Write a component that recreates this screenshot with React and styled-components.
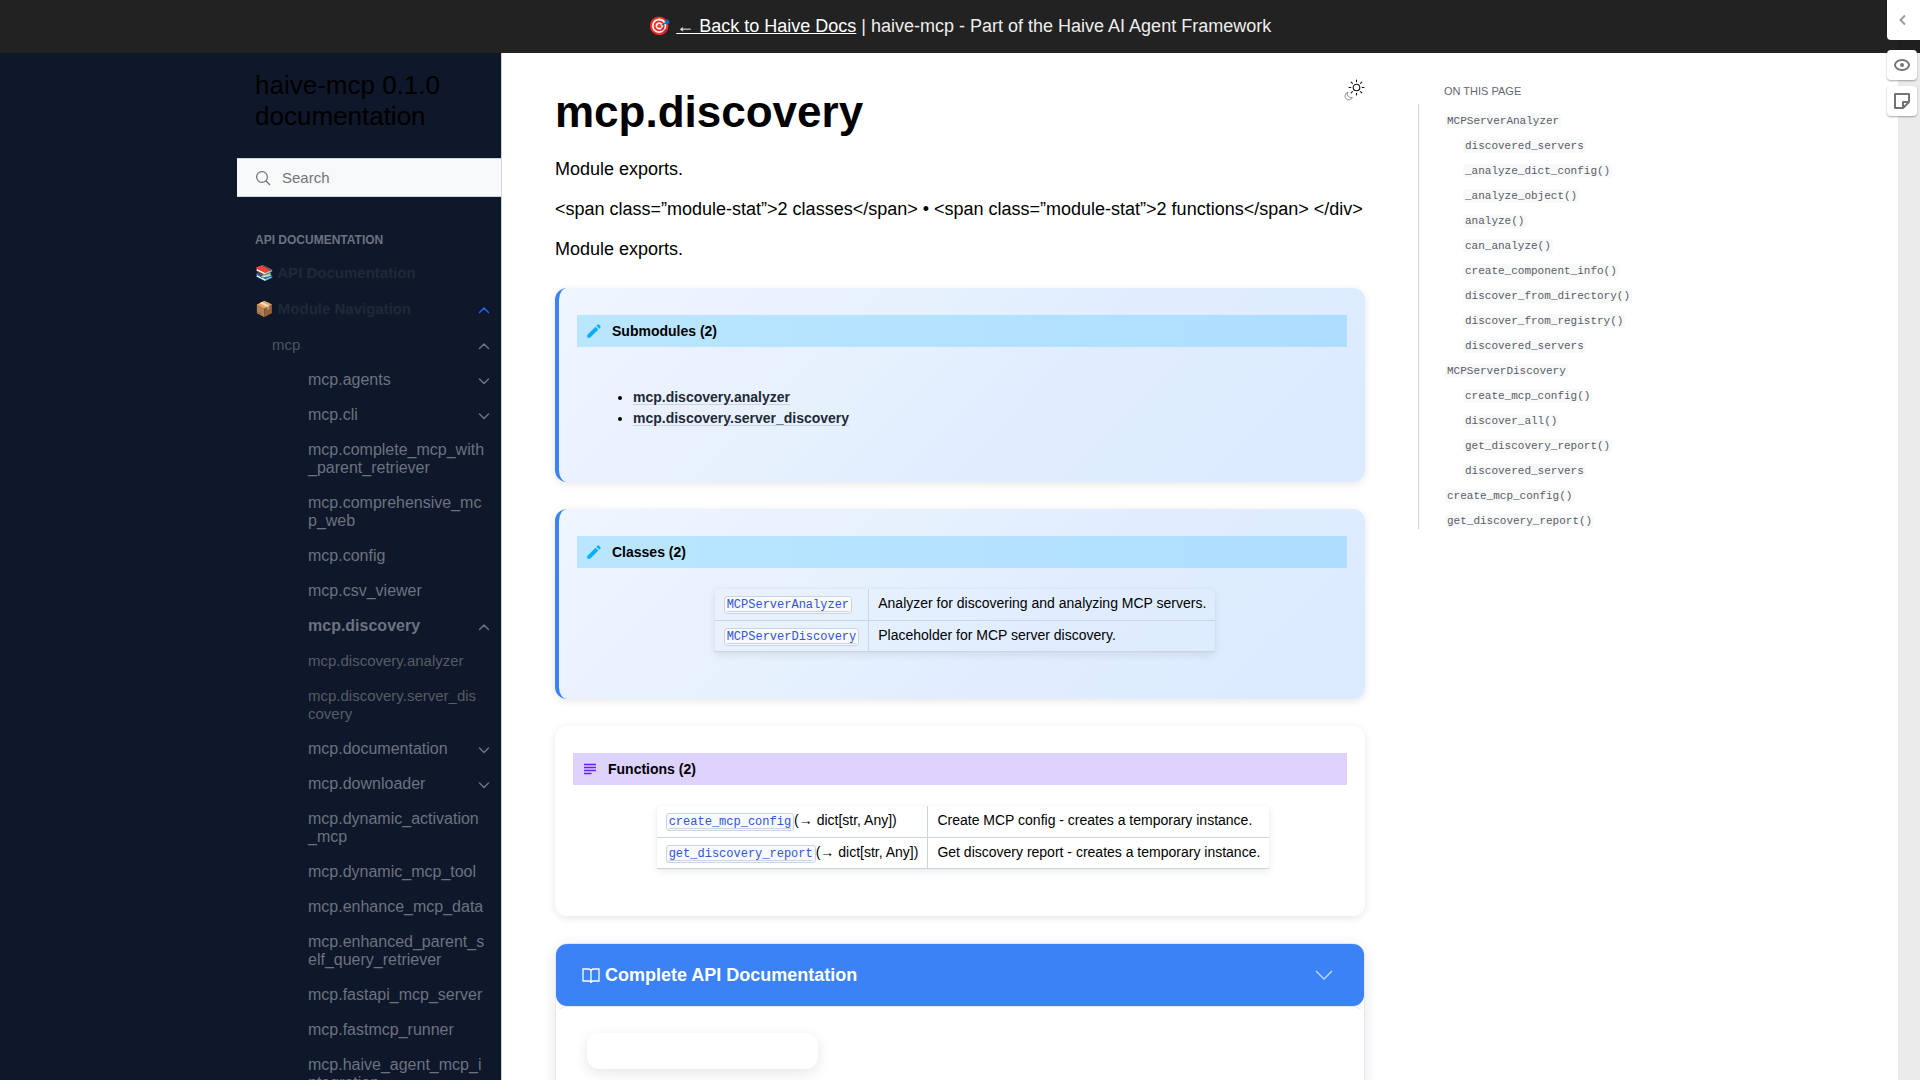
import React from "react";
import styled, { createGlobalStyle } from "styled-components";

const sans = `"Liberation Sans", Arial, "Noto Color Emoji", sans-serif`;
const mono = `"Liberation Mono", "Courier New", monospace`;
const line = "#cbd5e1";

const GlobalStyle = createGlobalStyle`
  *, *::before, *::after { box-sizing: border-box; }
  body { margin: 0; background: #fff; color: #000; font: 18px/26px ${sans}; }
  a { color: inherit; text-decoration: none; }
  ul { margin: 0; padding: 0; list-style: none; }
  button { margin: 0; padding: 0; border: 0; background: none; font: inherit; color: inherit; cursor: pointer; }
`;

const Page = styled.div`
  display: flex;
  flex-direction: column;
  height: 100vh;
  overflow: hidden;
`;

const Banner = styled.header`
  flex: none;
  height: 53px;
  padding: 13px 16px;
  background: #222;
  color: #eee;
  text-align: center;

  a { color: #fff; text-decoration: underline; }
`;

const Columns = styled.div`
  flex: 1;
  min-height: 0;
  display: grid;
  grid-template-columns: minmax(265px, 1fr) minmax(0, 916px) minmax(265px, 1fr);
  grid-template-rows: minmax(0, 1fr);
`;

const Sidebar = styled.aside`
  display: flex;
  justify-content: flex-end;
  background: #0f172a;
  border-right: 1px solid ${line};
  overflow: hidden;
`;

const SidebarInner = styled.div`
  width: 264px;
  flex: none;
`;

const Brand = styled.a`
  display: block;
  padding: 17px 18px 26px;
  font-size: 26px;
  line-height: 31px;
  color: #000;
`;

const SearchBox = styled.label`
  display: flex;
  align-items: center;
  gap: 11px;
  height: 39px;
  padding: 0 18px;
  background: #f8f9fb;
  border: solid ${line};
  border-width: 1px 0;
  color: #6b7280;

  input {
    flex: 1;
    min-width: 0;
    border: 0;
    padding: 0;
    outline: 0;
    background: transparent;
    font: 15px/18px ${sans};
  }
  input::placeholder { color: #757575; }
`;

const Caption = styled.p`
  margin: 34px 0 0;
  padding: 0 18px;
  font-size: 12px;
  line-height: 18px;
  font-weight: bold;
  text-transform: uppercase;
  color: #6b7280;
`;

const NavList = styled.ul`
  margin-top: 7px;
`;

const navTones = {
  top: "#1f2937",
  group: "#4b5563",
  module: "#6b7280",
  sub: "#565b66",
};

const navIndents = { top: 18, group: 35, module: 71, sub: 71 };

const navWidths = { top: 200, group: 178, module: 178, sub: 174 };

const NavRow = styled.div`
  display: flex;
  justify-content: space-between;
  min-height: ${(p) => (p.$kind === "top" ? 36 : 35)}px;
  padding-left: ${(p) => navIndents[p.$kind]}px;

  a {
    flex: none;
    max-width: ${(p) => navWidths[p.$kind]}px;
    padding: 8px 0 9px;
    font-size: ${(p) => (p.$kind === "module" ? 16 : 15)}px;
    line-height: 18px;
    font-weight: ${(p) => (p.$kind === "top" || p.$current ? "bold" : "normal")};
    color: ${(p) => navTones[p.$kind]};
    word-break: break-all;
  }
  button {
    flex: none;
    width: 12px;
    margin: 0 11px 0 -12px;
    height: 35px;
    display: flex;
    align-items: center;
    color: ${(p) => (p.$kind === "top" ? "#2563eb" : "#6b7280")};
  }
`;

const Main = styled.main`
  padding: 0 53px;
  overflow-y: auto;
  scrollbar-width: none;
`;

const TitleRow = styled.div`
  display: flex;
  justify-content: space-between;
  align-items: flex-start;
  padding-top: 26px;
  margin-bottom: 17px;

  h1 {
    margin: 6px 0 0;
    font-size: 44px;
    line-height: 54px;
  }
`;

const Para = styled.p`
  margin: 0 0 14px;
`;

const CardStack = styled.div`
  display: grid;
  gap: 27px;
  margin: 26px 0;
`;

const Card = styled.section`
  min-height: ${(p) => (p.$tall ? 194 : 190)}px;
  padding: 27px 18px;
  border-radius: 12px;
  box-shadow: 0 2px 8px rgba(0, 0, 0, 0.1);
  ${(p) =>
    p.$blue &&
    `border-left: 4px solid #3b82f6;
     background: linear-gradient(135deg, #eff6ff 0%, #ebf1fe 20%, #e6f1fe 40%, #e0edff 60%, #dbeafe 100%);`}
`;

const CardTitle = styled.h2`
  display: flex;
  align-items: center;
  gap: 9px;
  height: 32px;
  margin: 0;
  padding: 0 8px;
  font-size: 14px;
  line-height: 18px;
  background: ${(p) => (p.$violet ? "#ded2ff" : "linear-gradient(90deg, #bae6ff, #aeddff)")};
`;

const ModuleList = styled.ul`
  margin-top: 40px;
  padding-left: 56px;
  list-style: disc;
  font-size: 14px;
  line-height: 21px;
  font-weight: bold;

  a {
    color: #1f2937;
    text-decoration: underline;
    text-decoration-color: ${line};
    text-underline-offset: 2px;
  }
`;

const TableWrap = styled.div`
  display: flex;
  justify-content: center;
  padding: 21px 0 0 6px;
`;

const Summary = styled.table`
  border-spacing: 0;
  border-collapse: collapse;
  border-radius: 3px;
  box-shadow: 0 3px 8px rgba(0, 0, 0, 0.08), 0 0 1px rgba(0, 0, 0, 0.12);
  font-size: 14px;
  line-height: 21px;

  td {
    height: 31px;
    padding: 4px 9px 5px;
    border-bottom: 1px solid ${line};
    white-space: nowrap;
  }
  td:first-child { border-right: 1px solid ${line}; }
`;

const ApiLink = styled.a`
  code {
    padding: 1px 2px;
    border: 1px solid ${line};
    border-radius: 3px;
    background: #f8f9fb;
    font: 12px/14px ${mono};
    color: #2f55dc;
    text-decoration: underline;
    text-decoration-color: ${line};
    text-underline-offset: 3px;
  }
`;

const Disclosure = styled.section`
  border: 1px solid #e2e8f0;
  border-radius: 12px;
  box-shadow: 0 4px 16px rgba(0, 0, 0, 0.1);
`;

const DisclosureHead = styled.button`
  display: flex;
  align-items: center;
  gap: 5px;
  width: 100%;
  height: 62px;
  padding: 0 26px;
  border-radius: 11px;
  background: #3b82f6;
  color: #fff;
  font-weight: bold;

  span { flex: 1; text-align: left; }
`;

const DisclosureBody = styled.div`
  padding: 26px 31px 20px;
  border-top: 1px solid #e2e8f0;
  border-radius: 11px;
`;

const EmptyPill = styled.div`
  width: 231px;
  height: 36px;
  border-radius: 12px;
  box-shadow: 0 4px 14px rgba(0, 0, 0, 0.1);
`;

const Toc = styled.nav`
  padding-top: 29px;

  h2 {
    margin: 0 0 4px;
    padding-left: 26px;
    font-size: 11px;
    line-height: 18px;
    font-weight: normal;
    text-transform: uppercase;
    color: #646776;
  }
  ul {
    padding: 0 0 0 26px;
    border-left: 1px solid ${line};
  }
  li {
    display: flex;
    padding: 10px 0 1px;
  }
`;

const TocLink = styled.a`
  margin-left: ${(p) => (p.$nested ? 18 : 0)}px;
  padding: 0 2px;
  border-radius: 3px;
  background: #f8f9fb;
  font: 11px/14px ${mono};
  color: #5a5c63;
`;

const Annotator = styled.aside`
  position: fixed;
  top: 0;
  right: 0;
  width: 22px;
  height: 100vh;
  background: rgba(0, 0, 0, 0.08);
`;

const AnnotatorTools = styled.div`
  position: absolute;
  top: 0;
  right: 0;
  width: 33px;
  display: flex;
  flex-direction: column;
  gap: 6px;
`;

const ToolButton = styled.button`
  display: grid;
  place-items: center;
  width: 30px;
  height: 30px;
  border-radius: 4px;
  background: #fff;
  color: #737373;
  box-shadow: 0 1px 2px rgba(0, 0, 0, 0.35);
  ${(p) =>
    p.$tab &&
    `width: 33px; height: 40px; margin-bottom: 4px; border-radius: 0 0 0 4px; color: #9c9c9c; box-shadow: none;`}
`;

const Chevron = ({ up }) => (
  <svg width="12" height="12" viewBox="0 0 24 24" fill="none" stroke="currentColor" strokeWidth="3" strokeLinecap="round" strokeLinejoin="round">
    <path d={up ? "M3 17 12 8l9 9" : "M3 8l9 9 9-9"} />
  </svg>
);

const Magnifier = () => (
  <svg width="16" height="16" viewBox="0 0 16 16" fill="none" stroke="currentColor" strokeWidth="1.2">
    <circle cx="7" cy="7" r="5.4" />
    <path d="M11 11l4 4" />
  </svg>
);

const Pencil = () => (
  <svg width="18" height="18" viewBox="0 0 24 24" fill="#00b0ff">
    <path d="M20.71 7.04c.39-.39.39-1.04 0-1.41l-2.34-2.34c-.37-.39-1.02-.39-1.41 0l-1.84 1.83 3.75 3.75M3 17.25V21h3.75L17.81 9.93l-3.75-3.75L3 17.25Z" />
  </svg>
);

const TextLines = () => (
  <svg width="18" height="18" viewBox="0 0 24 24" fill="#651fff">
    <path d="M4 5h16v2H4V5m0 4h16v2H4V9m0 4h16v2H4v-2m0 4h10v2H4v-2Z" />
  </svg>
);

const Book = () => (
  <svg width="18" height="18" viewBox="0 0 18 18" fill="none" stroke="#fff" strokeWidth="1.3">
    <path d="M1 3h5.500Q9 3 9 5.200Q9 3 11.500 3H17v12h-5.500Q9 15 9 17Q9 15 6.500 15H1zM9 5v11" />
  </svg>
);

const SunMoon = () => (
  <svg width="22" height="22" viewBox="0 0 22 22" fill="none" stroke="#111" strokeWidth="1.1" strokeLinecap="round">
    <circle cx="13.500" cy="8.500" r="3.300" />
    <path d="M13.500 1v1.800M13.500 14.200V16M6 8.500h1.800M19.200 8.500H21M8.200 3.200l1.200 1.200M17.600 12.600l1.200 1.200M18.800 3.200l-1.200 1.200M9.400 12.600l-1.200 1.200" />
    <path d="M4.500 13.300a3.900 3.900 0 1 0 4.900 5.200a3.900 3.900 0 0 1-4.900-5.200z" stroke="#777" strokeWidth=".8" />
  </svg>
);

const nav = [
  ["top", "📚 API Documentation"],
  ["top", "📦 Module Navigation", "up"],
  ["group", "mcp", "up"],
  ["module", "mcp.agents", "down"],
  ["module", "mcp.cli", "down"],
  ["module", "mcp.complete_mcp_with_parent_retriever"],
  ["module", "mcp.comprehensive_mcp_web"],
  ["module", "mcp.config"],
  ["module", "mcp.csv_viewer"],
  ["module", "mcp.discovery", "up", true],
  ["sub", "mcp.discovery.analyzer"],
  ["sub", "mcp.discovery.server_discovery"],
  ["module", "mcp.documentation", "down"],
  ["module", "mcp.downloader", "down"],
  ["module", "mcp.dynamic_activation_mcp"],
  ["module", "mcp.dynamic_mcp_tool"],
  ["module", "mcp.enhance_mcp_data"],
  ["module", "mcp.enhanced_parent_self_query_retriever"],
  ["module", "mcp.fastapi_mcp_server"],
  ["module", "mcp.fastmcp_runner"],
  ["module", "mcp.haive_agent_mcp_integration"],
];

const toc = [
  ["MCPServerAnalyzer"],
  ["discovered_servers", 1],
  ["_analyze_dict_config()", 1],
  ["_analyze_object()", 1],
  ["analyze()", 1],
  ["can_analyze()", 1],
  ["create_component_info()", 1],
  ["discover_from_directory()", 1],
  ["discover_from_registry()", 1],
  ["discovered_servers", 1],
  ["MCPServerDiscovery"],
  ["create_mcp_config()", 1],
  ["discover_all()", 1],
  ["get_discovery_report()", 1],
  ["discovered_servers", 1],
  ["create_mcp_config()"],
  ["get_discovery_report()"],
];

const classes = [
  ["MCPServerAnalyzer", "", "Analyzer for discovering and analyzing MCP servers."],
  ["MCPServerDiscovery", "", "Placeholder for MCP server discovery."],
];

const functions = [
  ["create_mcp_config", "(→ dict[str, Any])", "Create MCP config - creates a temporary instance."],
  ["get_discovery_report", "(→ dict[str, Any])", "Get discovery report - creates a temporary instance."],
];

const SummaryTable = ({ rows }) => (
  <TableWrap>
    <Summary>
      <tbody>
        {rows.map(([name, signature, text]) => (
          <tr key={name}>
            <td>
              <ApiLink href={`#${name}`}><code>{name}</code></ApiLink>
              {signature}
            </td>
            <td>{text}</td>
          </tr>
        ))}
      </tbody>
    </Summary>
  </TableWrap>
);

export default function App() {
  return (
    <Page>
      <GlobalStyle />
      <Banner>
        🎯 <a href="#docs">← Back to Haive Docs</a> | haive-mcp - Part of the Haive AI Agent Framework
      </Banner>
      <Columns>
        <Sidebar>
          <SidebarInner>
            <Brand href="#home">haive-mcp 0.1.0 documentation</Brand>
            <SearchBox>
              <Magnifier />
              <input type="search" placeholder="Search" aria-label="Search" />
            </SearchBox>
            <Caption>API Documentation</Caption>
            <NavList>
              {nav.map(([kind, text, toggle, current]) => (
                <li key={text}>
                  <NavRow $kind={kind} $current={current}>
                    <a href={`#${text}`}>{text}</a>
                    {toggle && (
                      <button type="button" aria-label={`Toggle ${text}`}>
                        <Chevron up={toggle === "up"} />
                      </button>
                    )}
                  </NavRow>
                </li>
              ))}
            </NavList>
          </SidebarInner>
        </Sidebar>

        <Main>
          <TitleRow>
            <h1>mcp.discovery</h1>
            <button type="button" aria-label="Toggle theme"><SunMoon /></button>
          </TitleRow>
          <Para>Module exports.</Para>
          <Para>{"<span class=”module-stat”>2 classes</span> • <span class=”module-stat”>2 functions</span> </div>"}</Para>
          <Para>Module exports.</Para>

          <CardStack>
            <Card $blue $tall>
              <CardTitle><Pencil />Submodules (2)</CardTitle>
              <ModuleList>
                <li><a href="#analyzer">mcp.discovery.analyzer</a></li>
                <li><a href="#server">mcp.discovery.server_discovery</a></li>
              </ModuleList>
            </Card>
            <Card $blue>
              <CardTitle><Pencil />Classes (2)</CardTitle>
              <SummaryTable rows={classes} />
            </Card>
            <Card>
              <CardTitle $violet><TextLines />Functions (2)</CardTitle>
              <SummaryTable rows={functions} />
            </Card>

            <Disclosure>
              <DisclosureHead type="button" aria-expanded="true">
                <Book />
                <span>Complete API Documentation</span>
                <svg width="28" height="18" viewBox="0 0 28 18" fill="none" stroke="#fff" strokeOpacity=".65" strokeWidth="1.5">
                  <path d="M6 5l8 8 8-8" />
                </svg>
              </DisclosureHead>
              <DisclosureBody><EmptyPill /></DisclosureBody>
            </Disclosure>
          </CardStack>
        </Main>

        <Toc>
          <h2>On this page</h2>
          <ul>
            {toc.map(([text, nested], i) => (
              <li key={i}>
                <TocLink href={`#${text}`} $nested={nested}>{text}</TocLink>
              </li>
            ))}
          </ul>
        </Toc>
      </Columns>

      <Annotator>
        <AnnotatorTools>
          <ToolButton $tab type="button" aria-label="Open annotations">
            <svg width="16" height="16" viewBox="0 0 16 16" fill="none" stroke="currentColor" strokeWidth="2">
              <path d="M9 3.500 4.500 8 9 12.500" />
            </svg>
          </ToolButton>
          <ToolButton type="button" aria-label="Show highlights">
            <svg width="16" height="16" viewBox="0 0 16 16" fill="none" stroke="currentColor" strokeWidth="2">
              <ellipse cx="8" cy="8" rx="7" ry="5" />
              <circle cx="8" cy="8" r="1" fill="currentColor" />
            </svg>
          </ToolButton>
          <ToolButton type="button" aria-label="New page note">
            <svg width="16" height="16" viewBox="0 0 16 16" fill="none" stroke="currentColor" strokeWidth="2" strokeLinejoin="round">
              <path d="M1 1h14v8l-6 6H1zM15 9H9v6" />
            </svg>
          </ToolButton>
        </AnnotatorTools>
      </Annotator>
    </Page>
  );
}
